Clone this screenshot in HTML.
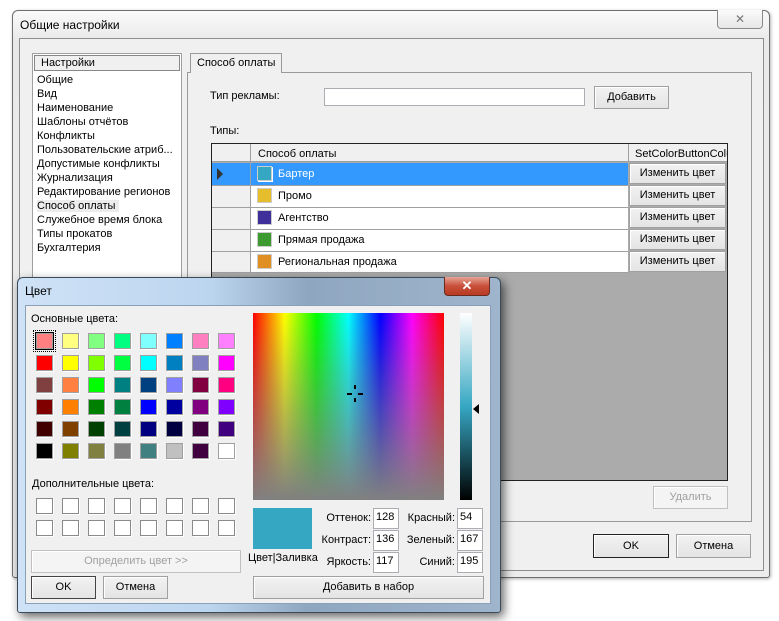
<!DOCTYPE html>
<html><head><meta charset="utf-8"><style>
*{box-sizing:border-box;margin:0;padding:0}
body{width:779px;height:621px;background:#fff;position:relative;overflow:hidden;font-family:"Liberation Sans",sans-serif;font-size:11px;color:#000}
.a{position:absolute;white-space:nowrap}
.btn{position:absolute;white-space:nowrap;background:linear-gradient(#f2f2f2,#e4e4e4);border:1px solid #a0a0a0;box-shadow:inset 1px 1px #fff;text-align:center;font-size:11px}
.inp{position:absolute;background:#fff;border:1px solid #abadb3}
.sw{position:absolute;width:17px;height:16px;border:1px solid #a0a0a0;box-shadow:1px 1px 0 #fff}
.lbl{position:absolute;text-align:right;white-space:nowrap}
</style></head><body>
<div class="a" style="left:12px;top:10px;width:758px;height:568px;border:1px solid #6e6e6e;border-radius:6px 6px 3px 3px;background:linear-gradient(#fafafa,#e9e9e9 30px,#ececec);box-shadow:1px 1px 3px rgba(0,0,0,.3)"></div>
<div class="a" style="left:20px;top:18px;font-size:12px">Общие настройки</div>
<div class="a" style="left:717px;top:10px;width:46px;height:19px;border:1px solid #8a8a8a;border-top:none;border-radius:0 0 4px 4px;background:linear-gradient(#fbfbfb,#e6e6e6);text-align:center;color:#777;font-size:12px;line-height:18px">✕</div>
<div class="a" style="left:19px;top:38px;width:745px;height:533px;border:1px solid #8d8d8d;background:#f0f0f0"></div>
<div class="a" style="left:32px;top:53px;width:150px;height:230px;border:1px solid #a0a0a0;background:#fff"></div>
<div class="a" style="left:34px;top:55px;width:146px;height:16px;border:1px solid #888;background:#f0f0f0;padding-left:6px;line-height:14px">Настройки</div>
<div class="a" style="left:37px;top:73px;line-height:14px">Общие<br>Вид<br>Наименование<br>Шаблоны отчётов<br>Конфликты<br>Пользовательские атриб...<br>Допустимые конфликты<br>Журнализация<br>Редактирование регионов<br><span style="background:#ececec;padding-right:4px">Способ оплаты</span><br>Служебное время блока<br>Типы прокатов<br>Бухгалтерия</div>
<div class="a" style="left:187px;top:72px;width:565px;height:450px;border:1px solid #9a9a9a;background:#f0f0f0"></div>
<div class="a" style="left:190px;top:53px;width:92px;height:20px;border:1px solid #9a9a9a;border-bottom:none;background:#f0f0f0;padding-left:6px;line-height:18px;font-size:11px">Способ оплаты</div>
<div class="a" style="left:210px;top:90px">Тип рекламы:</div>
<div class="inp" style="left:324px;top:88px;width:261px;height:18px"></div>
<div class="btn" style="left:594px;top:86px;width:75px;height:23px;line-height:21px">Добавить</div>
<div class="a" style="left:210px;top:125px">Типы:</div>
<div class="a" style="left:211px;top:143px;width:517px;height:338px;border:1px solid #222;background:#ababab"></div>
<div class="a" style="left:212px;top:144px;width:515px;height:18px;background:#f0f0f0;border-bottom:1px solid #a0a0a0"></div>
<div class="a" style="left:250px;top:144px;width:1px;height:128px;background:#a0a0a0"></div>
<div class="a" style="left:628px;top:144px;width:1px;height:18px;background:#a0a0a0"></div>
<div class="a" style="left:258px;top:148px">Способ оплаты</div>
<div class="a" style="left:635px;top:148px;width:92px;overflow:hidden">SetColorButtonColumn</div>
<div class="a" style="left:212px;top:163px;width:38px;height:22px;background:#3399ff"></div>
<div class="a" style="left:251px;top:163px;width:377px;height:22px;background:#3399ff"></div>
<div class="a" style="left:217px;top:168px;width:0;height:0;border-left:6px solid #333;border-top:6px solid transparent;border-bottom:6px solid transparent"></div>
<div class="a" style="left:212px;top:186px;width:38px;height:86px;background:#f0f0f0"></div>
<div class="a" style="left:251px;top:186px;width:377px;height:86px;background:#fff"></div>
<div class="a" style="left:212px;top:185px;width:416px;height:1px;background:#a0a0a0"></div>
<div class="a" style="left:212px;top:207px;width:416px;height:1px;background:#a0a0a0"></div>
<div class="a" style="left:212px;top:229px;width:416px;height:1px;background:#a0a0a0"></div>
<div class="a" style="left:212px;top:251px;width:416px;height:1px;background:#a0a0a0"></div>
<div class="a" style="left:212px;top:272px;width:416px;height:1px;background:#a0a0a0"></div>
<div class="sw" style="left:257px;top:166px;width:15px;height:15px;background:#36a7c3;border-color:#ccc"></div>
<div class="sw" style="left:257px;top:188px;width:15px;height:15px;background:#e5bd2d;border-color:#ccc"></div>
<div class="sw" style="left:257px;top:210px;width:15px;height:15px;background:#3f2f9a;border-color:#ccc"></div>
<div class="sw" style="left:257px;top:232px;width:15px;height:15px;background:#3d9a30;border-color:#ccc"></div>
<div class="sw" style="left:257px;top:254px;width:15px;height:15px;background:#e08f22;border-color:#ccc"></div>
<div class="a" style="left:278px;top:168px;color:#fff">Бартер</div>
<div class="a" style="left:278px;top:190px">Промо</div>
<div class="a" style="left:278px;top:212px">Агентство</div>
<div class="a" style="left:278px;top:234px">Прямая продажа</div>
<div class="a" style="left:278px;top:256px">Региональная продажа</div>
<div class="btn" style="left:629px;top:163px;width:97px;height:21px;line-height:19px">Изменить цвет</div>
<div class="btn" style="left:629px;top:185px;width:97px;height:21px;line-height:19px">Изменить цвет</div>
<div class="btn" style="left:629px;top:207px;width:97px;height:21px;line-height:19px">Изменить цвет</div>
<div class="btn" style="left:629px;top:229px;width:97px;height:21px;line-height:19px">Изменить цвет</div>
<div class="btn" style="left:629px;top:251px;width:97px;height:21px;line-height:19px">Изменить цвет</div>
<div class="btn" style="left:653px;top:486px;width:75px;height:23px;line-height:21px;color:#a0a0a0;background:#f4f4f4;border-color:#c0c0c0">Удалить</div>
<div class="btn" style="left:593px;top:534px;width:76px;height:24px;line-height:22px;border:1px solid #222">OK</div>
<div class="btn" style="left:676px;top:534px;width:75px;height:24px;line-height:22px">Отмена</div>

<div class="a" style="left:17px;top:277px;width:484px;height:336px;border:1px solid #3a4a5a;border-radius:6px 6px 3px 3px;background:linear-gradient(90deg,#cfe2f6 0%,#bcd5ef 40%,#8fa6c0 60%,#9fb5cc 100%);box-shadow:3px 4px 10px rgba(0,0,0,.6)"></div>
<div class="a" style="left:25px;top:284px;font-size:12px">Цвет</div>
<div class="a" style="left:444px;top:277px;width:46px;height:19px;border:1px solid #6b2a20;border-top:none;border-radius:0 0 4px 4px;background:linear-gradient(#e8a496,#c8503a 50%,#b83a22);text-align:center;color:#fff;font-weight:bold;font-size:13px;line-height:18px">✕</div>
<div class="a" style="left:25px;top:305px;width:466px;height:299px;border:1px solid #8aa0b8;background:#f0f0f0"></div>
<div class="a" style="left:31px;top:313px">Основные цвета:</div>
<div id="basic"></div>
<div class="a" style="left:32px;top:478px">Дополнительные цвета:</div>
<div class="btn" style="left:31px;top:550px;width:210px;height:23px;line-height:21px;color:#a0a0a0;background:#f4f4f4;border-color:#c0c0c0">Определить цвет &gt;&gt;</div>
<div class="btn" style="left:31px;top:576px;width:65px;height:23px;line-height:21px;border:1px solid #444">OK</div>
<div class="btn" style="left:103px;top:576px;width:65px;height:23px;line-height:21px">Отмена</div>
<div class="a" style="left:253px;top:313px;width:191px;height:187px;background:linear-gradient(to bottom,rgba(128,128,128,0),rgba(128,128,128,1)),linear-gradient(90deg,#f00,#ff0 16.6%,#0f0 33.3%,#0ff 50%,#00f 66.6%,#f0f 83.3%,#f00)"></div>
<div class="a" style="left:347px;top:393px;width:5px;height:2px;background:#000"></div>
<div class="a" style="left:358px;top:393px;width:5px;height:2px;background:#000"></div>
<div class="a" style="left:354px;top:385px;width:2px;height:4px;background:#000"></div>
<div class="a" style="left:354px;top:398px;width:2px;height:4px;background:#000"></div>
<div class="a" style="left:460px;top:313px;width:12px;height:187px;background:linear-gradient(#fff,#36a7c3 50%,#000)"></div>
<div class="a" style="left:473px;top:404px;width:0;height:0;border-right:6px solid #000;border-top:5px solid transparent;border-bottom:5px solid transparent"></div>
<div class="a" style="left:253px;top:508px;width:59px;height:41px;background:#36a7c3"></div>
<div class="a" style="left:248px;top:552px">Цвет|Заливка</div>
<div class="lbl" style="left:310px;top:512px;width:61px">Оттенок:</div>
<div class="lbl" style="left:310px;top:534px;width:61px">Контраст:</div>
<div class="lbl" style="left:310px;top:556px;width:61px">Яркость:</div>
<div class="lbl" style="left:395px;top:512px;width:60px">Красный:</div>
<div class="lbl" style="left:395px;top:534px;width:60px">Зеленый:</div>
<div class="lbl" style="left:395px;top:556px;width:60px">Синий:</div>
<div class="inp" style="left:373px;top:508px;width:26px;height:21px;padding:2px">128</div>
<div class="inp" style="left:373px;top:530px;width:26px;height:21px;padding:2px">136</div>
<div class="inp" style="left:373px;top:552px;width:26px;height:21px;padding:2px">117</div>
<div class="inp" style="left:457px;top:508px;width:26px;height:21px;padding:2px">54</div>
<div class="inp" style="left:457px;top:530px;width:26px;height:21px;padding:2px">167</div>
<div class="inp" style="left:457px;top:552px;width:26px;height:21px;padding:2px">195</div>
<div class="btn" style="left:253px;top:576px;width:231px;height:23px;line-height:21px">Добавить в набор</div>
<script>
var c=["#ff8080","#ffff80","#80ff80","#00ff80","#80ffff","#0080ff","#ff80c0","#ff80ff",
"#ff0000","#ffff00","#80ff00","#00ff40","#00ffff","#0080c0","#8080c0","#ff00ff",
"#804040","#ff8040","#00ff00","#008080","#004080","#8080ff","#800040","#ff0080",
"#800000","#ff8000","#008000","#008040","#0000ff","#0000a0","#800080","#8000ff",
"#400000","#804000","#004000","#004040","#000080","#000040","#400040","#400080",
"#000000","#808000","#808040","#808080","#408080","#c0c0c0","#400040","#ffffff"];
var h="";
for(var i=0;i<48;i++){var x=36+(i%8)*26,y=333+Math.floor(i/8)*22;h+='<div class="sw" style="left:'+x+'px;top:'+y+'px;background:'+c[i]+'"></div>';}
for(var i=0;i<16;i++){var x=36+(i%8)*26,y=498+Math.floor(i/8)*22;h+='<div class="sw" style="left:'+x+'px;top:'+y+'px;background:#fff;border-color:#8a8a8a"></div>';}
h+='<div class="a" style="left:33px;top:330px;width:23px;height:22px;border:1px dotted #000"></div><div class="a" style="left:35px;top:332px;width:19px;height:18px;border:1px solid #000"></div>';
document.getElementById("basic").innerHTML=h;
</script>
</body></html>
